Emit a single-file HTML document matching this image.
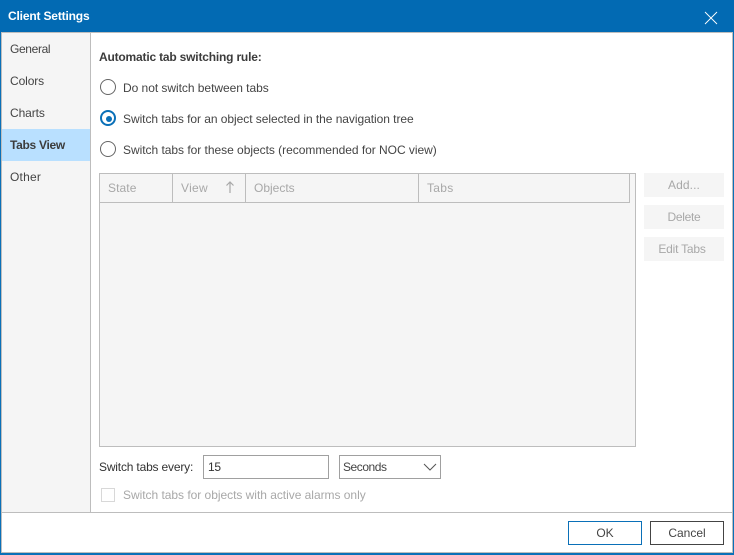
<!DOCTYPE html>
<html><head><meta charset="utf-8">
<style>
html,body{margin:0;padding:0;width:734px;height:555px;overflow:hidden;background:#fff}
body{position:relative;font-family:"Liberation Sans",sans-serif;font-size:12px;color:#444}
.a{position:absolute;box-sizing:border-box}
.t{position:absolute;white-space:nowrap;line-height:16px;height:16px}
.g{color:#a8a8a8}
.btn{position:absolute;box-sizing:border-box;background:#f5f5f5;color:#a8a8a8;text-align:center;line-height:24px;left:644px;width:80px;height:24px}
.r{position:absolute;left:100px;width:16px;height:16px;box-sizing:border-box;border:1.5px solid #666;border-radius:50%;background:#fff}
.vl{position:absolute;width:1px;background:#bdbdbd;top:173px;height:30px}
</style></head><body>
<div class="a" style="left:0;top:0;width:734px;height:33px;background:#026ab3"></div>
<div class="t" style="left:8px;top:8px;color:#fff;font-weight:bold;font-size:12px;letter-spacing:-.17px">Client Settings</div>
<svg class="a" style="left:704px;top:11px" width="14" height="14"><path d="M1 1L13 13M13 1L1 13" stroke="#fff" stroke-width=".9" fill="none"/></svg>

<div class="a" style="left:0;top:33px;width:1px;height:522px;background:#0a70b8"></div>
<div class="a" style="left:733px;top:33px;width:1px;height:522px;background:#0a70b8"></div>
<div class="a" style="left:0;top:553px;width:734px;height:2px;background:#0a70b8"></div>
<div class="a" style="left:1px;top:32px;width:732px;height:521px;border:1px solid #bdbdbd;background:#fff"></div>

<div class="a" style="left:2px;top:33px;width:88px;height:479px;background:#f5f5f5"></div>
<div class="a" style="left:90px;top:33px;width:1px;height:479px;background:#bdbdbd"></div>
<div class="a" style="left:2px;top:129px;width:88px;height:32px;background:#b9e0ff"></div>
<div class="a" style="left:2px;top:512px;width:730px;height:1px;background:#bdbdbd"></div>
<div class="t" style="left:10px;top:41px;letter-spacing:-.35px">General</div>
<div class="t" style="left:10px;top:73px;letter-spacing:-.1px">Colors</div>
<div class="t" style="left:10px;top:105px;letter-spacing:-.1px">Charts</div>
<div class="t" style="left:10px;top:137px;font-weight:bold;color:#3c3c3c;letter-spacing:-.3px">Tabs View</div>
<div class="t" style="left:10px;top:169px;letter-spacing:.2px">Other</div>

<div class="t" style="left:99px;top:49px;font-weight:bold;color:#3c3c3c;letter-spacing:-.19px">Automatic tab switching rule:</div>

<div class="r" style="top:79px"></div>
<div class="t" style="left:123px;top:80px;letter-spacing:-.04px">Do not switch between tabs</div>
<div class="r" style="top:110px;border:2px solid #0a70b8"><div class="a" style="left:4px;top:4px;width:6px;height:6px;border-radius:50%;background:#0a70b8"></div></div>
<div class="t" style="left:123px;top:111px;letter-spacing:-.05px">Switch tabs for an object selected in the navigation tree</div>
<div class="r" style="top:141px"></div>
<div class="t" style="left:123px;top:142px;letter-spacing:-.03px">Switch tabs for these objects (recommended for NOC view)</div>

<div class="a" style="left:99px;top:173px;width:537px;height:274px;border:1px solid #bdbdbd;background:#f5f5f5"></div>
<div class="a" style="left:100px;top:202px;width:530px;height:1px;background:#bdbdbd"></div>
<div class="vl" style="left:172px"></div>
<div class="vl" style="left:245px"></div>
<div class="vl" style="left:418px"></div>
<div class="vl" style="left:629px"></div>
<div class="t g" style="left:108px;top:180px;letter-spacing:.1px">State</div>
<div class="t g" style="left:181px;top:180px;letter-spacing:.3px">View</div>
<svg class="a" style="left:225px;top:180px" width="10" height="14"><path d="M5 2V13M1.5 5.5L5 2L8.5 5.5" stroke="#a8a8a8" stroke-width="1.2" fill="none"/></svg>
<div class="t g" style="left:254px;top:180px;letter-spacing:0">Objects</div>
<div class="t g" style="left:427px;top:180px;letter-spacing:.3px">Tabs</div>

<div class="btn" style="top:173px;letter-spacing:.1px">Add...</div>
<div class="btn" style="top:205px;letter-spacing:-.3px">Delete</div>
<div class="btn" style="top:237px;padding-right:4px;letter-spacing:-.2px">Edit Tabs</div>

<div class="t" style="left:99px;top:459px;color:#333;letter-spacing:-.18px">Switch tabs every:</div>
<div class="a" style="left:203px;top:455px;width:126px;height:24px;border:1px solid #a0a0a0"></div>
<div class="t" style="left:208px;top:459px;color:#333;letter-spacing:-.3px">15</div>
<div class="a" style="left:339px;top:455px;width:102px;height:24px;border:1px solid #a0a0a0"></div>
<div class="t" style="left:343px;top:459px;letter-spacing:-.45px">Seconds</div>
<svg class="a" style="left:423px;top:463px" width="14" height="9"><path d="M1 1L7 7L13 1" stroke="#555" stroke-width="1" fill="none"/></svg>

<div class="a" style="left:101px;top:488px;width:14px;height:14px;border:1px solid #d8d8d8;background:#fff"></div>
<div class="t g" style="left:123px;top:487px;letter-spacing:-.03px">Switch tabs for objects with active alarms only</div>

<div class="a" style="left:568px;top:521px;width:74px;height:24px;border:1px solid #0a70b8;text-align:center;line-height:22px;color:#444">OK</div>
<div class="a" style="left:650px;top:521px;width:74px;height:24px;border:1px solid #444;text-align:center;line-height:22px;color:#444;letter-spacing:0">Cancel</div>
</body></html>
